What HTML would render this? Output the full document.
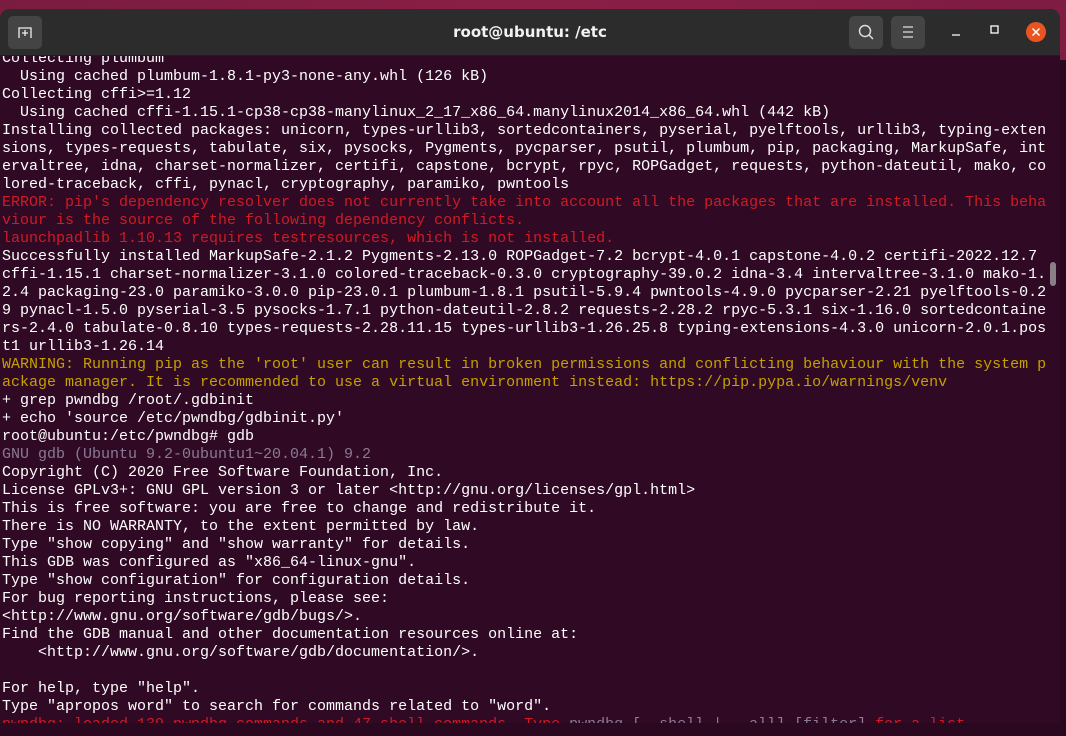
<!DOCTYPE html>
<html><head><meta charset="utf-8"><style>
html,body{margin:0;padding:0;width:1066px;height:736px;overflow:hidden;background:#2a0920}
.desk{position:absolute;left:0;top:0;width:1066px;height:60px;background:linear-gradient(90deg,#7a1c40,#8a1f45 50%,#7e1c44)}
.win{position:absolute;left:0;top:9px;width:1060px;height:714px;background:#300a24;border-radius:10px 10px 0 0;overflow:hidden}
.tb{position:absolute;left:0;top:0;width:1060px;height:46px;background:#2c2c2c;border-bottom:1px solid #1e1e1e}
.btn{position:absolute;top:7px;width:34px;height:33px;background:#444;border-radius:5px}
.title{position:absolute;left:0;width:1060px;top:14px;text-align:center;color:#f2f2f2;font:bold 15px "DejaVu Sans","Liberation Sans",sans-serif}
.term{position:absolute;left:2px;top:41px;margin:0;font:15px/18px "Liberation Mono",monospace;color:#fff;white-space:pre}
.r{color:#d01b24}.y{color:#c4a000}.g{color:#8a7a95}
.sb{position:absolute;left:1050px;top:253px;width:6px;height:24px;background:#8a7f86;border-radius:3px}
</style></head><body>
<div class="desk"></div>
<div class="win">
<pre class="term">Collecting plumbum
  Using cached plumbum-1.8.1-py3-none-any.whl (126 kB)
Collecting cffi&gt;=1.12
  Using cached cffi-1.15.1-cp38-cp38-manylinux_2_17_x86_64.manylinux2014_x86_64.whl (442 kB)
Installing collected packages: unicorn, types-urllib3, sortedcontainers, pyserial, pyelftools, urllib3, typing-exten
sions, types-requests, tabulate, six, pysocks, Pygments, pycparser, psutil, plumbum, pip, packaging, MarkupSafe, int
ervaltree, idna, charset-normalizer, certifi, capstone, bcrypt, rpyc, ROPGadget, requests, python-dateutil, mako, co
lored-traceback, cffi, pynacl, cryptography, paramiko, pwntools
<span class="r">ERROR: pip's dependency resolver does not currently take into account all the packages that are installed. This beha
viour is the source of the following dependency conflicts.
launchpadlib 1.10.13 requires testresources, which is not installed.</span>
Successfully installed MarkupSafe-2.1.2 Pygments-2.13.0 ROPGadget-7.2 bcrypt-4.0.1 capstone-4.0.2 certifi-2022.12.7
cffi-1.15.1 charset-normalizer-3.1.0 colored-traceback-0.3.0 cryptography-39.0.2 idna-3.4 intervaltree-3.1.0 mako-1.
2.4 packaging-23.0 paramiko-3.0.0 pip-23.0.1 plumbum-1.8.1 psutil-5.9.4 pwntools-4.9.0 pycparser-2.21 pyelftools-0.2
9 pynacl-1.5.0 pyserial-3.5 pysocks-1.7.1 python-dateutil-2.8.2 requests-2.28.2 rpyc-5.3.1 six-1.16.0 sortedcontaine
rs-2.4.0 tabulate-0.8.10 types-requests-2.28.11.15 types-urllib3-1.26.25.8 typing-extensions-4.3.0 unicorn-2.0.1.pos
t1 urllib3-1.26.14
<span class="y">WARNING: Running pip as the 'root' user can result in broken permissions and conflicting behaviour with the system p
ackage manager. It is recommended to use a virtual environment instead: https://pip.pypa.io/warnings/venv</span>
+ grep pwndbg /root/.gdbinit
+ echo 'source /etc/pwndbg/gdbinit.py'
root@ubuntu:/etc/pwndbg# gdb
<span class="g">GNU gdb (Ubuntu 9.2-0ubuntu1~20.04.1) 9.2</span>
Copyright (C) 2020 Free Software Foundation, Inc.
License GPLv3+: GNU GPL version 3 or later &lt;http://gnu.org/licenses/gpl.html&gt;
This is free software: you are free to change and redistribute it.
There is NO WARRANTY, to the extent permitted by law.
Type "show copying" and "show warranty" for details.
This GDB was configured as "x86_64-linux-gnu".
Type "show configuration" for configuration details.
For bug reporting instructions, please see:
&lt;http://www.gnu.org/software/gdb/bugs/&gt;.
Find the GDB manual and other documentation resources online at:
    &lt;http://www.gnu.org/software/gdb/documentation/&gt;.

For help, type "help".
Type "apropos word" to search for commands related to "word".
<span class="r">pwndbg: loaded 139 pwndbg commands and 47 shell commands. Type </span><span class="g">pwndbg [--shell | --all] [filter]</span><span class="r"> for a list.</span></pre>
<div class="sb"></div>
<div class="tb">
  <div class="btn" style="left:8px"><svg width="34" height="33" viewBox="0 0 34 33"><path d="M11 22V12h12v10M17 14v6M14 17h6" stroke="#eee" stroke-width="1.3" fill="none"/></svg></div>
  <div class="title">root@ubuntu: /etc</div>
  <div class="btn" style="left:849px"><svg width="34" height="33" viewBox="0 0 34 33"><circle cx="16" cy="15" r="5.5" stroke="#ddd" stroke-width="1.5" fill="none"/><path d="M20 19l4 4" stroke="#ddd" stroke-width="1.5"/></svg></div>
  <div class="btn" style="left:891px"><svg width="34" height="33" viewBox="0 0 34 33"><path d="M12 11h10M12 16h10M12 21h10" stroke="#ddd" stroke-width="1.2"/></svg></div>
  <svg style="position:absolute;left:950px;top:14px" width="20" height="20"><path d="M2 12h8" stroke="#fff" stroke-width="1.3"/></svg>
  <svg style="position:absolute;left:988px;top:14px" width="20" height="20"><rect x="3" y="3" width="7" height="7" stroke="#fff" stroke-width="1.3" fill="none"/></svg>
  <svg style="position:absolute;left:1026px;top:13px" width="22" height="22"><circle cx="10" cy="10" r="10" fill="#e95420"/><path d="M6.5 6.5l7 7M13.5 6.5l-7 7" stroke="#fff" stroke-width="1.5"/></svg>
</div>
</div>
</body></html>
